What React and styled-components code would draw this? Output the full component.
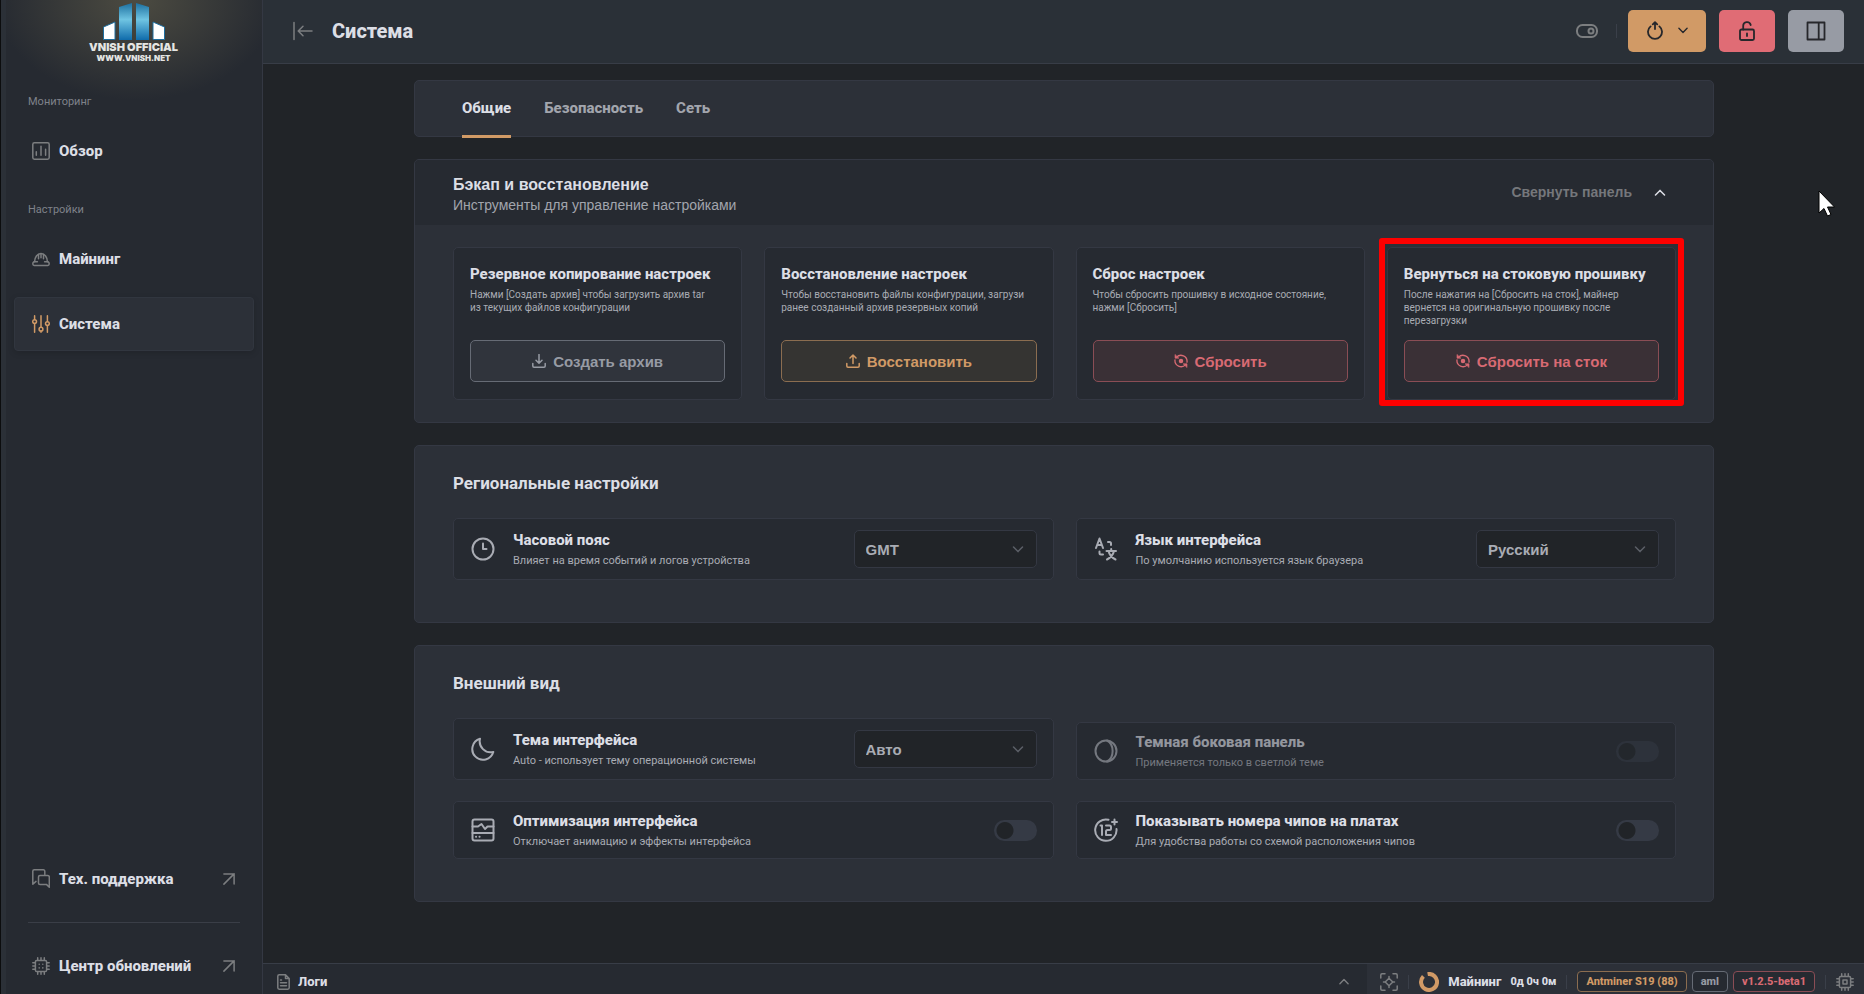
import { useState } from 'react';
import styled, { createGlobalStyle, css } from 'styled-components';

const roboto = `Roboto, 'Liberation Sans', sans-serif`;
const arial = `'Liberation Sans', Arial, sans-serif`;

const tones = {
    gray: { text: '#979ba4', border: '#666b75', fill: '#30343c' },
    orange: { text: '#d19a66', border: '#8b6d50', fill: '#353432' },
    red: { text: '#d86a73', border: '#8a4d55', fill: '#3a3036' },
};

const GlobalStyle = createGlobalStyle`
    *, *::before, *::after { box-sizing: border-box; }
    body {
        margin: 0;
        background: #212428;
        color: #dcdee5;
        font-family: ${roboto};
    }
    button, select, input { font: inherit; color: inherit; }
    h1, h2, h3, p { margin: 0; }
    a { color: inherit; text-decoration: none; }
`;

const Page = styled.div`
    display: flex;
    height: 100vh;
    overflow: hidden;
`;

const Sidebar = styled.aside`
    display: flex;
    flex-direction: column;
    flex: 0 0 263px;
    padding: 0 8px 1px 13px;
    border-right: 1px solid #343843;
    background:
        linear-gradient(90deg, #0c0d0e 1px, #2b3037 1px, #2b3037 6px, transparent 6px),
        radial-gradient(ellipse 140px 100px at 136px 0, #4c4b41, #262a31),
        #262a31;
`;

const Logo = styled.a`
    display: flex;
    flex-direction: column;
    align-items: center;
    height: 64px;
    padding: 2px 0 0;
    margin-bottom: 30px;
    font-family: Inter, ${arial};
    font-weight: 900;
    color: #e4e4e2;
    svg { flex: none; }
`;

const LogoName = styled.span`
    font-size: 11px;
    line-height: 11px;
`;

const LogoSite = styled.span`
    font-size: 8px;
    line-height: 10px;
`;

const NavLabel = styled.p`
    margin: 0 0 14px 15px;
    font-size: 11px;
    line-height: 16px;
    color: #7f828a;
`;

const NavLink = styled.a`
    display: flex;
    align-items: center;
    gap: 9px;
    height: 54px;
    padding: 0 18px 1px 17px;
    margin-left: 1px;
    border: 1px solid transparent;
    border-radius: 4px;
    font-size: 15px;
    font-weight: 800;
    color: #dcdee5;
    svg { flex: none; color: #7c7e80; }
    svg:last-child:not(:first-child) { margin-left: auto; }
    ${({ $active }) => $active && css`
        background: #2c3038;
        border-color: #31363f;
        box-shadow: 0 2px 6px rgba(0, 0, 0, 0.15);
        svg { color: #d19a66; }
    `}
`;

const NavGroup = styled.nav`
    display: flex;
    flex-direction: column;
    gap: ${({ $gap }) => $gap || 0}px;
    margin-bottom: 24px;
`;

const NavBottom = styled.nav`
    margin-top: auto;
`;

const NavDivider = styled.hr`
    height: 1px;
    margin: 16px 14px 16px 15px;
    border: 0;
    background: #3a3e47;
`;

const Main = styled.main`
    display: flex;
    flex-direction: column;
    flex: 1;
    min-width: 0;
`;

const Header = styled.header`
    display: flex;
    align-items: center;
    flex: 0 0 64px;
    padding: 0 20px 2px 30px;
    border-bottom: 1px solid #383d47;
    background: #2a3037;
`;

const IconButton = styled.button`
    display: flex;
    padding: 0;
    border: 0;
    background: none;
    color: #7c7e80;
    cursor: pointer;
`;

const PageTitle = styled.h1`
    margin-left: 19px;
    margin-right: auto;
    font-size: 20px;
    font-weight: 800;
`;

const Separator = styled.span`
    width: 1px;
    height: 14px;
    background: #3a3f49;
`;

const HeaderButton = styled.button`
    display: flex;
    align-items: center;
    justify-content: center;
    gap: 14px;
    width: ${({ $wide }) => ($wide ? 78 : 56)}px;
    height: 42px;
    margin-left: 13px;
    padding: 0;
    border: 0;
    border-radius: 5px;
    background: ${({ $color }) => $color};
    color: #26272b;
    cursor: pointer;
`;

const HeaderTools = styled.div`
    display: flex;
    align-items: center;
    gap: 18px;
    margin-right: -2px;
`;

const Content = styled.div`
    flex: 1;
    min-height: 0;
    overflow: hidden;
    padding: 16px 23px 0 24px;
`;

const Column = styled.div`
    display: flex;
    flex-direction: column;
    gap: 22px;
    max-width: 1300px;
    margin: 0 auto;
`;

const Panel = styled.section`
    border: 1px solid #343843;
    border-radius: 5px;
    background: #2c3038;
`;

const Tabs = styled.div`
    display: flex;
    gap: 33px;
    height: 57px;
    padding: 0 47px;
    border: 1px solid #343843;
    border-radius: 5px;
    background: #2c3038;
`;

const Tab = styled.button`
    height: 57px;
    padding: 0;
    border: 0;
    border-bottom: 3px solid ${({ $active }) => ($active ? '#d19a66' : 'transparent')};
    background: none;
    font-size: 15px;
    font-weight: 800;
    color: ${({ $active }) => ($active ? '#dcdee5' : '#a2a5ad')};
    cursor: pointer;
`;

const PanelHead = styled.div`
    display: flex;
    align-items: flex-start;
    justify-content: space-between;
    height: 65px;
    padding: 15px 47px 0 38px;
    border-radius: 4px 4px 0 0;
    background: #262a31;
`;

const HeadTitle = styled.h2`
    font-family: ${arial};
    font-size: 16px;
    line-height: 20px;
    font-weight: 700;
`;

const HeadNote = styled.p`
    font-family: ${arial};
    font-size: 14px;
    line-height: 20px;
    color: #a2a5ad;
`;

const Collapse = styled.button`
    display: flex;
    align-items: center;
    gap: 22px;
    height: 34px;
    padding: 0;
    border: 0;
    background: none;
    font-family: ${arial};
    font-size: 14px;
    font-weight: 700;
    color: #75777b;
    cursor: pointer;
    svg { color: #dcdee5; }
`;

const CardGrid = styled.div`
    display: grid;
    grid-template-columns: repeat(4, 1fr);
    gap: 22px;
    padding: 22px 37px 22px 38px;
`;

const Card = styled.article`
    position: relative;
    display: flex;
    flex-direction: column;
    min-height: 153px;
    padding: 16px 16px 17px;
    border: 1px solid #343843;
    border-radius: 5px;
    background: #262a31;
`;

const Highlight = styled.span`
    position: absolute;
    inset: -10px -9px -7px -9px;
    border: 6px solid #fe0000;
    border-radius: 3px;
    pointer-events: none;
`;

const CardTitle = styled.h3`
    font-size: 15px;
    line-height: 20px;
    font-weight: 800;
    white-space: nowrap;
`;

const CardText = styled.p`
    margin: 4px 0 12px;
    font-size: 10px;
    line-height: 13px;
    color: #a9acb4;
`;

const CardButton = styled.button`
    display: flex;
    align-items: center;
    justify-content: center;
    gap: 7px;
    height: 42px;
    margin-top: auto;
    border: 1px solid ${({ $tone }) => tones[$tone].border};
    border-radius: 5px;
    background: ${({ $tone }) => tones[$tone].fill};
    font-family: ${arial};
    font-size: 15px;
    font-weight: 700;
    color: ${({ $tone }) => tones[$tone].text};
    cursor: pointer;
`;

const SectionTitle = styled.h2`
    padding: 27px 38px 25px;
    font-size: 17px;
    line-height: 20px;
    font-weight: 700;
`;

const RowGrid = styled.div`
    display: grid;
    grid-template-columns: 1fr 1fr;
    align-items: end;
    gap: 21px 22px;
    padding: 0 37px 42px 38px;
`;

const Row = styled.div`
    display: flex;
    align-items: center;
    gap: 18px;
    padding: ${({ $select }) => ($select ? 11 : 9)}px 16px ${({ $select }) => ($select ? 11 : 9)}px 17px;
    border: 1px solid #343843;
    border-radius: 5px;
    background: #262a31;
    color: #a9acb4;
    > svg { flex: none; }
    > svg, label { opacity: ${({ $disabled }) => ($disabled ? 0.6 : 1)}; }
`;

const RowLabel = styled.label`
    flex: 1;
    min-width: 0;
`;

const RowTitle = styled.span`
    display: block;
    font-size: 15px;
    line-height: 20px;
    font-weight: 800;
    color: #dcdee5;
`;

const RowNote = styled.span`
    display: block;
    margin-top: 4px;
    font-size: 11px;
    line-height: 14px;
    color: #a9acb4;
`;

const SelectBox = styled.div`
    display: grid;
    align-items: center;
    flex: 0 0 183px;
    select, svg { grid-area: 1 / 1; }
    svg { justify-self: end; margin-right: 13px; color: #5b5f67; pointer-events: none; }
`;

const Select = styled.select`
    appearance: none;
    height: 38px;
    padding: 0 34px 0 11px;
    border: 1px solid #343843;
    border-radius: 5px;
    background: #212428;
    font-family: ${arial};
    font-size: 15px;
    font-weight: 700;
    color: #a9acb4;
`;

const Switch = styled.input`
    appearance: none;
    flex: none;
    width: 43px;
    height: 21px;
    margin: 0;
    border-radius: 11px;
    background: radial-gradient(circle at 11px 50%, #212428 8px, #353a45 9px);
    &:checked { background: radial-gradient(circle at 32px 50%, #212428 8px, #d19a66 9px); }
    &:disabled { background: radial-gradient(circle at 11px 50%, #23272c 8px, #2d323b 9px); }
`;

const Footer = styled.footer`
    display: flex;
    flex: 0 0 31px;
    border-top: 1px solid #383d47;
    background: #262a31;
    font-size: 13px;
    font-weight: 800;
`;

const Logs = styled.button`
    display: flex;
    align-items: center;
    gap: 8px;
    flex: 1;
    padding: 5px 18px 0 14px;
    border: 0;
    background: none;
    color: #7c7e80;
    cursor: pointer;
    span { flex: 1; text-align: left; color: #dcdee5; }
`;

const Status = styled.div`
    display: flex;
    align-items: center;
    gap: 9px;
    padding: 5px 10px 0 13px;
    background: #2c3038;
    > svg { flex: none; color: #7c7e80; }
    ${Separator} { margin: 0 1px; }
`;

const Ring = styled.span`
    width: 20px;
    height: 20px;
    color: #d19a66;
`;

const Uptime = styled.span`
    font-size: 11px;
`;

const Badges = styled.div`
    display: flex;
    gap: 5px;
`;

const Badge = styled.span`
    height: 21px;
    padding: 0 8px;
    border: 1px solid ${({ $tone }) => tones[$tone].border};
    border-radius: 4px;
    background: #262a31;
    font-size: 11px;
    line-height: 20px;
    color: ${({ $tone }) => tones[$tone].text};
`;

const Cursor = styled.svg`
    position: fixed;
    left: 1818px;
    top: 190px;
    pointer-events: none;
`;

function Icon({ w = 18, h = w, box, stroke = 1.5, children }) {
    return (
        <svg
            width={w}
            height={h}
            viewBox={box || `0 0 ${w} ${h}`}
            fill="none"
            stroke="currentColor"
            strokeWidth={stroke}
            strokeLinecap="round"
            strokeLinejoin="round"
            aria-hidden="true"
        >
            {children}
        </svg>
    );
}

const ChartIcon = () => (
    <Icon>
        <rect x="0.8" y="0.8" width="16.4" height="16.4" rx="1.6" />
        <path d="M4.3 9.8v3.4M9 4.2v9M13.6 7.2v6" />
    </Icon>
);

const HelmetIcon = () => (
    <Icon>
        <path d="M2.6 11.8C2.6 7.4 5.3 3.6 9 3.6s6.4 3.8 6.4 8.2" />
        <path d="M1.8 11.8h3.6M12.6 11.8h3.6M1.8 11.8c-1.4 1-1.3 3.6.3 3.6h13.8c1.6 0 1.7-2.6.3-3.6" />
        <path d="M6.5 4.4v4.4M9 3.8v4M11.5 4.4v4.4" />
    </Icon>
);

const SlidersIcon = () => (
    <Icon>
        <path d="M2.6.8v3.8M2.6 8.6v8.6M9 .8v11.4M9 16.2v1M15.4.8v5.8M15.4 10.6v6.6" />
        <circle cx="2.6" cy="6.6" r="1.9" />
        <circle cx="9" cy="14.2" r="1.9" />
        <circle cx="15.4" cy="8.6" r="1.9" />
    </Icon>
);

const ChatIcon = () => (
    <Icon h={20}>
        <path d="M12.8 5.6V2.2c0-.8-.6-1.4-1.4-1.4H2.2C1.4.8.8 1.4.8 2.2v13L4 12.4" />
        <path d="M15.8 6.4H8c-.9 0-1.5.6-1.5 1.5v6c0 .9.6 1.5 1.5 1.5h6.4l2.9 2.9V7.9c0-.9-.6-1.5-1.5-1.5z" />
    </Icon>
);

const ChipIcon = ({ core }) => (
    <Icon>
        <rect x="3.4" y="3.4" width="11.2" height="11.2" rx="1.4" />
        <path d="M5.7.8v2.4M9 .8v2.4M12.3.8v2.4M5.7 14.8v2.4M9 14.8v2.4M12.3 14.8v2.4" />
        <path d="M.8 5.7h2.4M.8 9h2.4M.8 12.3h2.4M14.8 5.7h2.4M14.8 9h2.4M14.8 12.3h2.4" />
        {core
            ? <rect x="7" y="7" width="4" height="4" />
            : <path d="M7.2 7.2v.1M10.8 7.2v.1M7.2 10.8v.1M10.8 10.8v.1" />}
    </Icon>
);

const OutIcon = () => (
    <Icon w={12}>
        <path d="M.9.9h10.2v10.2M11.1.9L.9 11.1" />
    </Icon>
);

const Chevron = ({ up, w = 11 }) => (
    <Icon w={w} h={7} box="0 0 11 7">
        <path d={up ? 'M1 6l4.5-4.6L10 6' : 'M1 1l4.5 4.6L10 1'} />
    </Icon>
);

const TrayIcon = ({ up }) => (
    <Icon w={14}>
        <path d="M.8 9.5V12c0 .8.5 1.2 1.2 1.2h10c.8 0 1.2-.5 1.2-1.2V9.5" />
        <path d={up ? 'M7 9.5V1M4 4l3-3 3 3' : 'M7 .5V9M4 6.2l3 3 3-3'} />
    </Icon>
);

const ResetIcon = () => (
    <Icon w={14} stroke={1.3}>
        <path d="M2.4 3.4a6.1 6.1 0 0 1 10.6 4.8M11.600 10.600A6.100 6.100 0 0 1 1 5.800" />
        <path d="M1 .8v3.400h3.600zM13 13.200V9.800H9.400z" fill="currentColor" strokeWidth="0.6" />
        <circle cx="7" cy="7" r="1.6" fill="currentColor" />
    </Icon>
);

const LogoMark = () => (
    <svg width="64" height="40" viewBox="0 0 64 40" aria-hidden="true">
        <defs>
            <linearGradient id="tower" x1="0" y1="0" x2="0" y2="1">
                <stop offset="0" stopColor="#1c6f9f" />
                <stop offset="0.45" stopColor="#6fc4e2" />
                <stop offset="1" stopColor="#0f6bab" />
            </linearGradient>
        </defs>
        <path d="M17 5l13-4v37H17z" fill="url(#tower)" />
        <path d="M34 1l13 4v33H34z" fill="url(#tower)" />
        <path d="M1.5 25L13 20v17.5H1.5zM62.5 25L51 20v17.5h11.5z" fill="#fff" stroke="#1f6e9e" />
    </svg>
);

const cards = [
    {
        title: 'Резервное копирование настроек',
        text: <>Нажми [Создать архив] чтобы загрузить архив tar<br />из текущих файлов конфигурации</>,
        action: 'Создать архив',
        tone: 'gray',
        icon: <TrayIcon />,
    },
    {
        title: 'Восстановление настроек',
        text: <>Чтобы восстановить файлы конфигурации, загрузи<br />ранее созданный архив резервных копий</>,
        action: 'Восстановить',
        tone: 'orange',
        icon: <TrayIcon up />,
    },
    {
        title: 'Сброс настроек',
        text: <>Чтобы сбросить прошивку в исходное состояние,<br />нажми [Сбросить]</>,
        action: 'Сбросить',
        tone: 'red',
        icon: <ResetIcon />,
    },
    {
        title: 'Вернуться на стоковую прошивку',
        text: <>После нажатия на [Сбросить на сток], майнер<br />вернется на оригинальную прошивку после<br />перезагрузки</>,
        action: 'Сбросить на сток',
        tone: 'red',
        icon: <ResetIcon />,
        highlighted: true,
    },
];

function SelectRow({ id, icon, title, note, options }) {
    return (
        <Row $select>
            {icon}
            <RowLabel htmlFor={id}>
                <RowTitle>{title}</RowTitle>
                <RowNote>{note}</RowNote>
            </RowLabel>
            <SelectBox>
                <Select id={id}>
                    {options.map((option) => <option key={option}>{option}</option>)}
                </Select>
                <Chevron w={12} />
            </SelectBox>
        </Row>
    );
}

function SwitchRow({ id, icon, title, note, disabled }) {
    return (
        <Row $disabled={disabled}>
            {icon}
            <RowLabel htmlFor={id}>
                <RowTitle>{title}</RowTitle>
                <RowNote>{note}</RowNote>
            </RowLabel>
            <Switch id={id} type="checkbox" role="switch" disabled={disabled} />
        </Row>
    );
}

export default function App() {
    const [tab, setTab] = useState('Общие');
    const [open, setOpen] = useState(true);

    return (
        <Page>
            <GlobalStyle />
            <Sidebar>
                <Logo href="#">
                    <LogoMark />
                    <LogoName>VNISH OFFICIAL</LogoName>
                    <LogoSite>WWW.VNISH.NET</LogoSite>
                </Logo>
                <NavLabel>Мониторинг</NavLabel>
                <NavGroup>
                    <NavLink href="#"><ChartIcon />Обзор</NavLink>
                </NavGroup>
                <NavLabel>Настройки</NavLabel>
                <NavGroup $gap={11}>
                    <NavLink href="#"><HelmetIcon />Майнинг</NavLink>
                    <NavLink href="#" $active><SlidersIcon />Система</NavLink>
                </NavGroup>
                <NavBottom>
                    <NavLink href="#"><ChatIcon />Тех. поддержка<OutIcon /></NavLink>
                    <NavDivider />
                    <NavLink href="#"><ChipIcon />Центр обновлений<OutIcon /></NavLink>
                </NavBottom>
            </Sidebar>

            <Main>
                <Header>
                    <IconButton aria-label="Свернуть меню">
                        <Icon w={20}>
                            <path d="M1 1.5v17M5.5 10H19M10 5.2L5.2 10l4.8 4.8" />
                        </Icon>
                    </IconButton>
                    <PageTitle>Система</PageTitle>
                    <HeaderTools>
                        <IconButton aria-label="Режим">
                            <Icon w={22} h={14} stroke={2}>
                                <rect x="1" y="1" width="20" height="12" rx="5.5" />
                                <circle cx="15" cy="7" r="2.5" />
                            </Icon>
                        </IconButton>
                        <Separator />
                    </HeaderTools>
                    <HeaderButton $wide $color="#d19a66" aria-label="Перезапуск">
                        <Icon w={18} h={20} stroke={1.8}>
                            <path d="M4.6 5.4a7 7 0 1 0 8.8 0M9 8V1.5M6.8 3.4L9 1.2l2.2 2.2" />
                        </Icon>
                        <Chevron w={10} />
                    </HeaderButton>
                    <HeaderButton $color="#e06c75" aria-label="Разблокировать">
                        <Icon w={16} h={20} stroke={1.8}>
                            <rect x="1" y="8.5" width="14" height="10.5" rx="1.5" />
                            <path d="M4.2 8.5V5a3.8 3.8 0 0 1 7.5-1M8 12.5V15" />
                        </Icon>
                    </HeaderButton>
                    <HeaderButton $color="#979ba4" aria-label="Боковая панель">
                        <Icon w={20} stroke={1.8}>
                            <path d="M1.5 1.5h17v17h-17zM12.7 1.5v17" />
                        </Icon>
                    </HeaderButton>
                </Header>

                <Content>
                    <Column>
                        <Tabs role="tablist">
                            {['Общие', 'Безопасность', 'Сеть'].map((name) => (
                                <Tab
                                    key={name}
                                    role="tab"
                                    aria-selected={tab === name}
                                    $active={tab === name}
                                    onClick={() => setTab(name)}
                                >
                                    {name}
                                </Tab>
                            ))}
                        </Tabs>

                        <Panel>
                            <PanelHead>
                                <div>
                                    <HeadTitle>Бэкап и восстановление</HeadTitle>
                                    <HeadNote>Инструменты для управление настройками</HeadNote>
                                </div>
                                <Collapse onClick={() => setOpen(!open)}>
                                    Свернуть панель
                                    <Chevron up={open} w={12} />
                                </Collapse>
                            </PanelHead>
                            {open && (
                                <CardGrid>
                                    {cards.map((card) => (
                                        <Card key={card.title}>
                                            <CardTitle>{card.title}</CardTitle>
                                            <CardText>{card.text}</CardText>
                                            <CardButton $tone={card.tone}>{card.icon}{card.action}</CardButton>
                                            {card.highlighted && <Highlight />}
                                        </Card>
                                    ))}
                                </CardGrid>
                            )}
                        </Panel>

                        <Panel>
                            <SectionTitle>Региональные настройки</SectionTitle>
                            <RowGrid>
                                <SelectRow
                                    id="timezone"
                                    title="Часовой пояс"
                                    note="Влияет на время событий и логов устройства"
                                    options={['GMT']}
                                    icon={(
                                        <Icon w={24} stroke={2}>
                                            <circle cx="12" cy="12" r="10.5" />
                                            <path d="M12 6.5V12h3.5" />
                                        </Icon>
                                    )}
                                />
                                <SelectRow
                                    id="language"
                                    title="Язык интерфейса"
                                    note="По умолчанию используется язык браузера"
                                    options={['Русский']}
                                    icon={(
                                        <Icon w={24} stroke={2}>
                                            <path d="M2 11L5.5 1.5 9 11M3.2 8h4.6" />
                                            <path d="M14 5h1.5C16.5 5 17 5.5 17 6.500V8M5.5 14.5V16c0 1 .5 1.5 1.5 1.5h2" />
                                            <path d="M12.5 14H22M17.2 12v2M20 14c-.8 3.5-4 7-7 8.5M14.5 14c.8 3.5 4 7 7 8.5" />
                                        </Icon>
                                    )}
                                />
                            </RowGrid>
                        </Panel>

                        <Panel>
                            <SectionTitle>Внешний вид</SectionTitle>
                            <RowGrid>
                                <SelectRow
                                    id="theme"
                                    title="Тема интерфейса"
                                    note="Auto - использует тему операционной системы"
                                    options={['Авто']}
                                    icon={(
                                        <Icon w={24} stroke={2}>
                                            <path d="M9 1.8A10.7 10.7 0 1 0 22.3 15 11 11 0 0 1 9 1.8z" />
                                        </Icon>
                                    )}
                                />
                                <SwitchRow
                                    id="darkside"
                                    title="Темная боковая панель"
                                    note="Применяется только в светлой теме"
                                    disabled
                                    icon={(
                                        <Icon w={24} stroke={2}>
                                            <circle cx="12" cy="12" r="10.5" />
                                            <path d="M13 1.5c7.5 4 7.5 17 0 21" />
                                        </Icon>
                                    )}
                                />
                                <SwitchRow
                                    id="optimize"
                                    title="Оптимизация интерфейса"
                                    note="Отключает анимацию и эффекты интерфейса"
                                    icon={(
                                        <Icon w={24} stroke={2}>
                                            <rect x="1.5" y="1.5" width="21" height="21" rx="2" />
                                            <path d="M1.5 8.5H7L10.5 6l3.5 5 2.5-2.5h6M1.5 15h21M5 18.8h.1M8.5 18.8h.1" />
                                        </Icon>
                                    )}
                                />
                                <SwitchRow
                                    id="chips"
                                    title="Показывать номера чипов на платах"
                                    note="Для удобства работы со схемой расположения чипов"
                                    icon={(
                                        <Icon w={24} stroke={2}>
                                            <path d="M14.5 1.8A10.7 10.7 0 1 0 22.5 11" />
                                            <path d="M6.5 7.5H8V17M12 7.5h3.5c1 0 1.5.5 1.5 1.5v1.5c0 1-.5 1.5-1.5 1.5h-2c-1 0-1.5.5-1.5 1.5V17h5" />
                                            <path d="M20.5 1.5v5M18 4h5" />
                                        </Icon>
                                    )}
                                />
                            </RowGrid>
                        </Panel>
                    </Column>
                </Content>

                <Footer>
                    <Logs>
                        <Icon w={13} h={16}>
                            <path d="M8.5.8H2.2C1.4.8.8 1.4.8 2.2v11.6c0 .8.6 1.4 1.4 1.4h8.6c.8 0 1.4-.6 1.4-1.4V4.5zM8.5.8v3.7h3.7" />
                            <path d="M3.5 6h1M3.5 8.8h6M3.5 11.8h6" />
                        </Icon>
                        <span>Логи</span>
                        <Chevron up w={10} />
                    </Logs>
                    <Status>
                        <Icon>
                            <path d="M.8 5V2C.8 1.2 1.2.8 2 .8h3M13 .8h3c.8 0 1.2.4 1.2 1.2v3" />
                            <path d="M17.2 13v3c0 .8-.4 1.2-1.2 1.2h-3M5 17.2H2c-.8 0-1.2-.4-1.2-1.2v-3" />
                            <path d="M9 5.2L12.8 9 9 12.8 5.2 9zM9 3.5v1.7M9 12.8v1.7M3.5 9h1.7M12.8 9h1.7" />
                        </Icon>
                        <Separator />
                        <Ring>
                            <Icon w={20} stroke={4}>
                                <path d="M8.6 2.1A8 8 0 1 1 4.4 4.3" strokeLinecap="butt" />
                            </Icon>
                        </Ring>
                        <span>Майнинг</span>
                        <Uptime>0д 0ч 0м</Uptime>
                        <Separator />
                        <Badges>
                            <Badge $tone="orange">Antminer S19 (88)</Badge>
                            <Badge $tone="gray">aml</Badge>
                            <Badge $tone="red">v1.2.5-beta1</Badge>
                        </Badges>
                        <Separator />
                        <ChipIcon core />
                    </Status>
                </Footer>
            </Main>
            <Cursor width="18" height="28" viewBox="0 0 18 28" aria-hidden="true">
                <path d="M1 1v22l5-4.5 3.5 7.5 3.5-1.5-3.5-7.5h7z" fill="#fff" stroke="#000" />
            </Cursor>
        </Page>
    );
}
